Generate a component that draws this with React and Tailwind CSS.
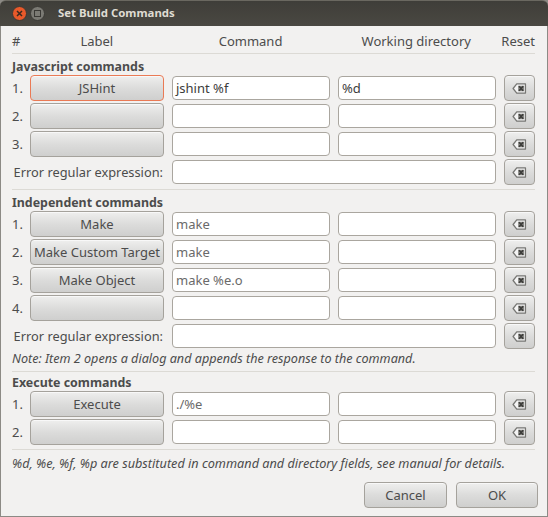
const font = { fontFamily: '"Noto Sans", sans-serif' };

function ClearIcon() {
  return (
    <svg width="15" height="11" viewBox="0 0 16 12" className="block">
      <path d="M5 1 H14.5 V11 H5 L1 6 Z" fill="#f4f4f4" stroke="#777774" strokeWidth="1.4" strokeLinejoin="round" />
      <rect x="6.5" y="3" width="6.5" height="6" fill="#8a8a86" />
      <path d="M7.5 3.5 L12 8.5 M12 3.5 L7.5 8.5" stroke="#3c3c3a" strokeWidth="1.8" />
    </svg>
  );
}

function Btn({ children, focus, className = "" }) {
  return (
    <div
      className={
        "flex items-center justify-center rounded-[4px] border bg-gradient-to-b from-[#efefee] via-[#dcdcdb] to-[#cfcfce] text-[13px] leading-none text-[#4c4c4c] whitespace-nowrap shadow-[inset_0_1px_0_#f8f8f8] " +
        (focus ? "border-[#ea7a55] " : "border-[#a5a29c] ") +
        className
      }
    >
      {children}
    </div>
  );
}

function Entry({ value, dim, className = "" }) {
  return (
    <div
      className={
        "h-6 flex items-center rounded-[4px] border border-[#aaa69f] bg-white px-[3px] text-[13px] leading-none whitespace-nowrap " +
        (dim ? "text-[#6a6a6a] " : "text-[#3c3c3c] ") +
        className
      }
    >
      {value}
    </div>
  );
}

function Reset() {
  return (
    <Btn className="w-[31px] h-[26px] ml-2">
      <ClearIcon />
    </Btn>
  );
}

function Row({ n, label, cmd, dir, focus, dim }) {
  return (
    <div className="flex items-center h-[26px] mb-[2px]">
      <div className="w-[18px] pt-[2px] text-[13px] text-[#4c4c4c]">{n}</div>
      <Btn focus={focus} className="w-[134px] h-[26px]">{label}</Btn>
      <Entry value={cmd} dim={dim} className="w-[158px] ml-2" />
      <Entry value={dir} className="w-[158px] ml-2" />
      <Reset />
    </div>
  );
}

function ErrorRow() {
  return (
    <div className="flex items-center h-[26px] mb-[2px]">
      <div className="w-[152px] pr-[1px] pt-[2px] text-right text-[12.8px] text-[#4c4c4c] whitespace-nowrap">Error regular expression:</div>
      <Entry className="w-[324px] ml-2" />
      <Reset />
    </div>
  );
}

function Heading({ children, className = "" }) {
  return <div className={"flex items-end text-[12.4px] font-bold leading-none text-[#4c4c4c] " + className}>{children}</div>;
}

function Sep() {
  return <div className="h-px bg-[#dcdad5]" />;
}

export default function App() {
  return (
    <div className="w-[548px] h-[517px] overflow-hidden bg-[#8c8a85]" style={font}>
      <div className="h-[26px] flex items-center rounded-t-[6px] border-t border-[#6a6860] bg-gradient-to-b from-[#3f3e39] to-[#4a4842]">
        <div className="ml-3 w-[15px] h-[15px] rounded-full bg-[#e9592a] border border-[#3a3935] flex items-center justify-center">
          <svg width="7" height="7" viewBox="0 0 7 7"><path d="M1 1 L6 6 M6 1 L1 6" stroke="#3a2a20" strokeWidth="1.5" /></svg>
        </div>
        <div className="ml-[3px] w-[15px] h-[15px] rounded-full bg-[#7b7a74] border border-[#3a3935] flex items-center justify-center">
          <div className="w-[7px] h-[7px] border border-[#3a3935]" />
        </div>
        <div className="ml-[13px] mb-[2px] text-[11.4px] font-bold text-[#dfdbd2] leading-none">Set Build Commands</div>
      </div>
      <div className="mx-[1px] mb-[1px] h-[490px] bg-[#f2f1f0] pl-[11px] pr-[12px]">
        <div className="h-[27px] flex items-center text-[13px] text-[#4c4c4c] leading-none pt-[4px]">
          <div className="w-[18px]">#</div>
          <div className="w-[134px] text-center">Label</div>
          <div className="w-[158px] ml-2 text-center">Command</div>
          <div className="w-[158px] ml-2 text-center">Working directory</div>
          <div className="w-[40px] text-right">Reset</div>
        </div>
        <Sep />
        <Heading className="h-[19px] mb-[2px]">Javascript commands</Heading>
        <Row n="1." label="JSHint" cmd="jshint %f" dir="%d" focus />
        <Row n="2." />
        <Row n="3." />
        <ErrorRow />
        <div className="h-[2px]" />
        <Sep />
        <Heading className="h-[19px] mb-[2px]">Independent commands</Heading>
        <Row n="1." label="Make" cmd="make" dim />
        <Row n="2." label="Make Custom Target" cmd="make" dim />
        <Row n="3." label="Make Object" cmd="make %e.o" dim />
        <Row n="4." />
        <ErrorRow />
        <div className="h-[16px] mb-[4px] flex items-center text-[12.6px] italic text-[#4c4c4c] leading-none whitespace-nowrap">Note: Item 2 opens a dialog and appends the response to the command.</div>
        <Sep />
        <Heading className="h-[17px] mb-[2px]">Execute commands</Heading>
        <Row n="1." label="Execute" cmd="./%e" dim />
        <Row n="2." />
        <div className="h-[2px]" />
        <Sep />
        <div className="h-[26px] flex items-center text-[12.7px] italic text-[#4c4c4c] leading-none whitespace-nowrap">%d, %e, %f, %p are substituted in command and directory fields, see manual for details.</div>
        <div className="mt-[6px] flex justify-end -mr-[3px] gap-[9px]">
          <Btn className="w-[83px] h-[26px]">Cancel</Btn>
          <Btn className="w-[82px] h-[26px]">OK</Btn>
        </div>
      </div>
    </div>
  );
}
